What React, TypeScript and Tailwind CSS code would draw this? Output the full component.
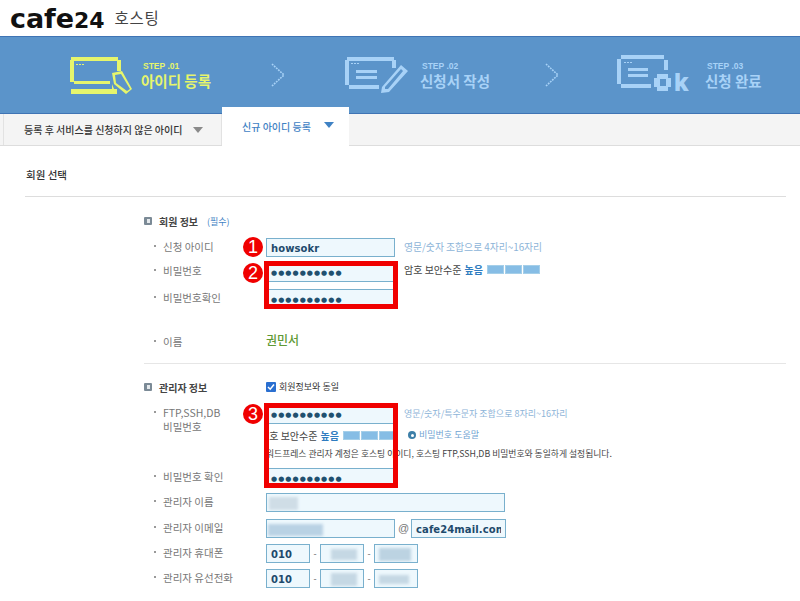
const kr = "font-['Noto_Sans_CJK_KR','Noto_Sans',sans-serif]";

function Step1Icon() {
  return (
    <svg width="64" height="42" viewBox="0 0 64 42" className="shrink-0" fill="#e6f56c">
      <rect x="1" y="1" width="47" height="4" />
      <rect x="0" y="4" width="4" height="22" />
      <rect x="47" y="4" width="4" height="11" />
      <rect x="4" y="25" width="36" height="3" />
      <rect x="1" y="33" width="46" height="5" />
      <rect x="6" y="8" width="2" height="1" />
      <rect x="9" y="8" width="2" height="1" />
      <rect x="12" y="8" width="2" height="1" />
      <path d="M42 17 L52 15 L62 33 L56 38 L44 28 Z M45 19 L46 27 L57 35 L60 33 L51 18 Z" fillRule="evenodd" />
      <path d="M42 28 L46 38 L42 38 Z" />
    </svg>
  );
}

function Step2Icon() {
  return (
    <svg width="66" height="40" viewBox="0 0 66 40" className="shrink-0" fill="#a8d2f7">
      <rect x="2" y="1" width="47" height="4" />
      <rect x="0" y="4" width="4" height="25" />
      <rect x="47" y="4" width="4" height="8" />
      <rect x="4" y="29" width="30" height="4" />
      <rect x="11" y="14" width="21" height="3" />
      <rect x="11" y="20" width="21" height="3" />
      <rect x="6" y="7" width="2" height="1" />
      <rect x="9" y="7" width="2" height="1" />
      <rect x="12" y="7" width="2" height="1" />
      <path d="M37 31 L56 9 L63 15 L44 36 L36 37 Z M40 31 L40 33 L43 33 L58 15 L56 13 Z" fillRule="evenodd" />
    </svg>
  );
}

function Step3Icon() {
  return (
    <svg width="76" height="40" viewBox="0 0 76 40" className="shrink-0" fill="#a8d2f7">
      <rect x="5" y="1" width="43" height="4" />
      <rect x="1" y="5" width="4" height="25" />
      <rect x="48" y="6" width="4" height="10" />
      <rect x="5" y="30" width="30" height="4" />
      <rect x="12" y="14" width="20" height="3" />
      <rect x="12" y="20" width="20" height="3" />
      <rect x="8" y="8" width="2" height="1" />
      <rect x="11" y="8" width="2" height="1" />
      <rect x="14" y="8" width="2" height="1" />
      <path d="M41 20 H52 V24 H55 V33 H52 V37 H41 V33 H38 V24 H41 Z M44 25 V32 H50 V25 Z" fillRule="evenodd" />
      <text x="58" y="37" fontSize="25" fontWeight="800" fontFamily="Inter, sans-serif">k</text>
    </svg>
  );
}

function Chevron() {
  return (
    <svg width="14" height="24" viewBox="0 0 14 24" className="shrink-0" fill="none">
      <path d="M1 1 L13 12 L1 23" stroke="#a8d2f7" strokeWidth="1.6" strokeDasharray="1.8 1" />
    </svg>
  );
}

function StepText({ num, title, on, className }: { num: string; title: string; on?: boolean; className: string }) {
  return (
    <div className={`-mt-[1px] flex flex-col ${className} ${on ? 'text-[#e6f56c]' : 'text-[#a8d2f7]'}`}>
      <span className="pl-[2px] font-['Liberation_Sans',sans-serif] text-[8.5px] font-bold leading-[11px]">{`STEP .${num}`}</span>
      <span className={`${kr} text-[14.5px] font-bold leading-[17px] whitespace-nowrap`}>{title}</span>
    </div>
  );
}

function Caret({ className }: { className: string }) {
  return (
    <svg width="10" height="6" viewBox="0 0 10 6" className={className}>
      <path d="M0 0 H10 L5 6 Z" fill="currentColor" />
    </svg>
  );
}

function Input({ className, children, dots }: { className: string; children?: React.ReactNode; dots?: boolean }) {
  return (
    <div
      className={`flex items-center overflow-hidden border border-[#79b0cd] bg-[#eef8fd] pl-[4px] font-['DejaVu_Sans',sans-serif] font-bold text-[#1d4a6c] ${
        dots ? 'pt-[3px] text-[7px] tracking-[1.05px] text-[#21506f]' : 'pt-[2px] text-[10px] tracking-[0.1px]'
      } ${className}`}
    >
      {children}
    </div>
  );
}

function Smudge({ className }: { className: string }) {
  return <div className={`blur-[1.5px] ${className}`} />;
}

function Row({ label, className, children }: { label: React.ReactNode; className: string; children?: React.ReactNode }) {
  return (
    <div className={`flex ${className}`}>
      <div className="flex w-[112px] shrink-0 items-start pt-[2px] text-[10.5px] leading-[14px] text-[#777]">
        <span className="mt-[5px] mr-[7px] h-[2px] w-[2px] shrink-0 rounded-full bg-[#777]" />
        <span>{label}</span>
      </div>
      {children}
    </div>
  );
}

function SectionTitle({ title }: { title: string }) {
  return (
    <div className="flex w-[122px] shrink-0 items-center">
      <span className="mr-[7px] flex h-[8px] w-[8px] items-center justify-center rounded-[1px] bg-[#7b8a96]">
        <span className="h-[4px] w-[3px] bg-[#e5e9ec]" />
      </span>
      <span className="text-[10px] font-bold text-[#444]">{title}</span>
    </div>
  );
}

function Strength() {
  return (
    <div className="flex items-center whitespace-nowrap">
      <span className="text-[10px] text-[#444]">암호 보안수준</span>
      <span className="ml-[3px] text-[10px] font-bold text-[#2f7cc0]">높음</span>
      <div className="ml-[4px] flex gap-[1px]">
        <span className="h-[9px] w-[17px] border border-[#a5cfe9] bg-[#86bde5]" />
        <span className="h-[9px] w-[17px] border border-[#a5cfe9] bg-[#86bde5]" />
        <span className="h-[9px] w-[17px] border border-[#a5cfe9] bg-[#86bde5]" />
      </div>
    </div>
  );
}

function Badge({ n, className }: { n: string; className: string }) {
  return (
    <div
      className={`absolute flex h-[20px] w-[20px] items-center justify-center rounded-full bg-[#f00000] font-['Liberation_Sans',sans-serif] text-[18px] leading-none text-white ${className}`}
    >
      {n}
    </div>
  );
}

export default function App() {
  return (
    <div className={`relative h-[601px] w-[800px] overflow-hidden bg-white ${kr}`}>
      <header className="flex h-[36px] items-center pl-[10px]">
        <span className="flex items-baseline font-['DejaVu_Sans',sans-serif] font-bold leading-none text-[#111]">
          <span className="text-[27px] tracking-[-0.1px]">cafe</span>
          <span className="text-[22px]">24</span>
        </span>
        <span className="ml-[10px] text-[15.5px] tracking-[0.7px] text-[#444]">호스팅</span>
      </header>

      <section className="flex h-[78px] items-center border-y border-[#3f74b4] bg-[#5b94ca]">
        <div className="ml-[70px] mt-[4px]"><Step1Icon /></div>
        <StepText num="01" title="아이디 등록" on className="ml-[7px]" />
        <div className="ml-[60px]"><Chevron /></div>
        <div className="ml-[60px] mt-[2px]"><Step2Icon /></div>
        <StepText num="02" title="신청서 작성" className="ml-[9px]" />
        <div className="ml-[55px]"><Chevron /></div>
        <div className="ml-[57px] -mt-[2px]"><Step3Icon /></div>
        <StepText num="03" title="신청 완료" className="ml-[13px]" />
      </section>

      <nav className="flex h-[32px] border-b border-[#ddd] bg-[#f4f4f4] pl-[3px]">
        <div className="flex w-[219px] items-center border-x border-[#e2e2e2] pl-[20px] text-[#333]">
          <span className="text-[10px] font-medium whitespace-nowrap">등록 후 서비스를 신청하지 않은 아이디</span>
          <Caret className="ml-[11px] text-[#8a8a8a]" />
        </div>
        <div className="relative z-10 -mt-[7px] flex h-[39px] w-[127px] items-center bg-white pl-[20px] text-[#3f82c4]">
          <span className="text-[10px] font-medium">신규 아이디 등록</span>
          <Caret className="ml-[13px] -mt-[3px]" />
        </div>
      </nav>

      <div className="ml-[25px] mr-[14px] flex h-[51px] items-center border-b border-[#ddd] pl-[1px] pt-[8px] text-[10.5px] font-medium text-[#333]">
        회원 선택
      </div>

      <main className="pl-[144px] pr-[14px]">
        <div className="mt-[16px] flex h-[16px] items-center">
          <SectionTitle title="회원 정보" />
        </div>
        <div className="-mt-[15px] mb-[-1px] ml-[63px] h-[16px] text-[9px] leading-[16px] text-[#3f82c4]">(필수)</div>

        <div className="ml-[10px]">
          <Row label="신청 아이디" className="mt-[9px] h-[19px]">
            <Input className="h-[19px] w-[129px]">howsokr</Input>
            <span className="ml-[9px] self-center text-[9.8px] text-[#8db4d8]">영문/숫자 조합으로 4자리~16자리</span>
          </Row>
          <Row label="비밀번호" className="mt-[5px] h-[20px]">
            <Input dots className="h-[20px] w-[129px]">●●●●●●●●●●</Input>
            <div className="ml-[9px]"><Strength /></div>
          </Row>
          <Row label="비밀번호확인" className="mt-[7px] h-[20px]">
            <Input dots className="h-[20px] w-[129px]">●●●●●●●●●●</Input>
          </Row>
          <Row label="이름" className="mt-[24px] h-[20px]">
            <span className="-mt-[2px] text-[12px] font-medium text-[#5f9a35]">권민서</span>
          </Row>
        </div>

        <div className="mt-[10px] border-t border-[#e6e6e6]" />

        <div className="mt-[15px] flex h-[16px] items-center">
          <SectionTitle title="관리자 정보" />
          <span className="flex h-[10px] w-[10px] items-center justify-center rounded-[1px] bg-[#2a6fd0]">
            <svg width="8" height="8" viewBox="0 0 8 8" fill="none">
              <path d="M1 4 L3.2 6.2 L7 1.6" stroke="#fff" strokeWidth="1.5" />
            </svg>
          </span>
          <span className="ml-[3px] text-[9px] text-[#333]">회원정보와 동일</span>
        </div>

        <div className="ml-[10px]">
          <Row label={<>FTP,SSH,DB<br />비밀번호</>} className="mt-[9px]">
            <div>
              <div className="flex items-center">
                <Input dots className="h-[20px] w-[129px]">●●●●●●●●●●</Input>
                <span className="ml-[9px] text-[9px] text-[#8db4d8]">영문/숫자/특수문자 조합으로 8자리~16자리</span>
              </div>
              <div className="mt-[3px] flex h-[16px] items-center">
                <div className="w-[129px] overflow-hidden">
                  <div className="-ml-[6px]"><Strength /></div>
                </div>
                <span className="ml-[13px] flex h-[8px] w-[8px] items-center justify-center rounded-full bg-[#3d7fa8]">
                  <span className="h-[3px] w-[3px] rounded-full bg-white" />
                </span>
                <span className="ml-[3px] text-[9px] text-[#6fa3d2]">비밀번호 도움말</span>
              </div>
              <div className="mt-[3px] h-[15px] text-[8.8px] leading-[15px] whitespace-nowrap text-[#444]">
                워드프레스 관리자 계정은 호스팅 아이디, 호스팅 FTP,SSH,DB 비밀번호와 동일하게 설정됩니다.
              </div>
            </div>
          </Row>
          <Row label="비밀번호 확인" className="mt-[7px] h-[20px]">
            <Input dots className="h-[20px] w-[129px]">●●●●●●●●●●</Input>
          </Row>
          <Row label="관리자 이름" className="mt-[5px] h-[19px]">
            <Input className="h-[19px] w-[239px]">
              <Smudge className="h-[13px] w-[29px] -ml-[2px] bg-[#cfdde6]" />
            </Input>
          </Row>
          <Row label="관리자 이메일" className="mt-[7px] h-[19px]">
            <Input className="h-[19px] w-[129px]">
              <Smudge className="h-[12px] w-[55px] -ml-[3px] bg-[#b9d2e4]" />
            </Input>
            <span className="ml-[3px] w-[13px] self-center font-['Liberation_Sans',sans-serif] text-[11px] text-[#777]">@</span>
            <Input className="h-[19px] w-[95px] whitespace-nowrap pr-[4px]">
              <span className="block overflow-hidden">cafe24mail.com</span>
            </Input>
          </Row>
          <Row label="관리자 휴대폰" className="mt-[6px] h-[19px]">
            <Input className="h-[19px] w-[44px]">010</Input>
            <span className="w-[10px] self-center text-center text-[9px] text-[#666]">-</span>
            <Input className="h-[19px] w-[44px] justify-center pl-0">
              <Smudge className="h-[11px] w-[26px] bg-[#c5d8e4]" />
            </Input>
            <span className="w-[10px] self-center text-center text-[9px] text-[#666]">-</span>
            <Input className="h-[19px] w-[44px] pl-[3px]">
              <Smudge className="h-[13px] w-[32px] bg-[#bcd3e2]" />
            </Input>
          </Row>
          <Row label="관리자 유선전화" className="mt-[6px] h-[19px]">
            <Input className="h-[19px] w-[44px]">010</Input>
            <span className="w-[10px] self-center text-center text-[9px] text-[#666]">-</span>
            <Input className="h-[19px] w-[44px] justify-center pl-0">
              <Smudge className="h-[13px] w-[26px] bg-[#c5d8e4]" />
            </Input>
            <span className="w-[10px] self-center text-center text-[9px] text-[#666]">-</span>
            <Input className="h-[19px] w-[44px] pl-[3px]">
              <Smudge className="h-[9px] w-[30px] bg-[#c5d8e4]" />
            </Input>
          </Row>
        </div>
      </main>

      <Badge n="1" className="left-[243px] top-[237px]" />
      <Badge n="2" className="left-[243px] top-[263px]" />
      <Badge n="3" className="left-[243px] top-[404px]" />
      <div className="absolute left-[264px] top-[261px] h-[48px] w-[134px] border-[5px] border-[#f00000]" />
      <div className="absolute left-[264px] top-[403px] h-[85px] w-[134px] border-[5px] border-[#f00000]" />
    </div>
  );
}
